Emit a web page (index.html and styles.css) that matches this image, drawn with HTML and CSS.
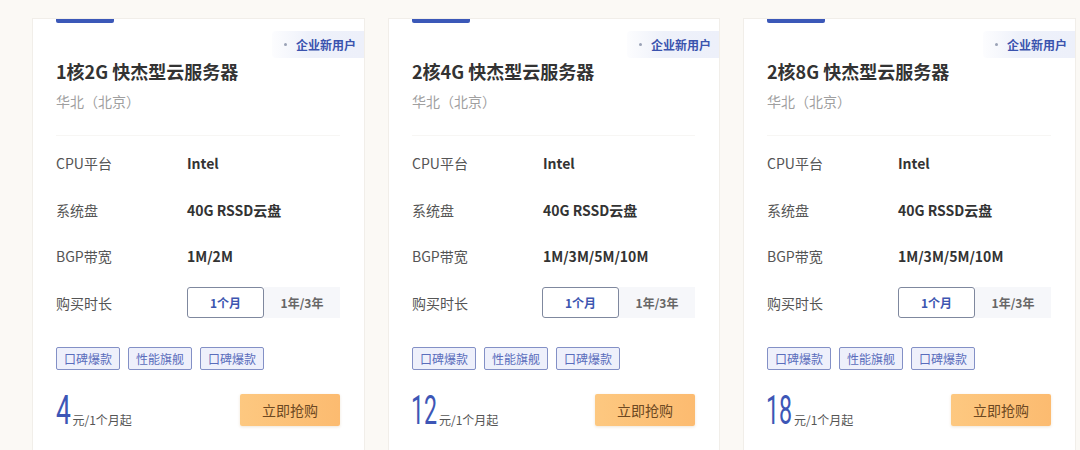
FILE: index.html
```html
<!DOCTYPE html>
<html lang="zh-CN">
<head>
<meta charset="utf-8">
<title>快杰型云服务器</title>
<link rel="stylesheet" href="styles.css">
</head>
<body>
<div class="cards">
  <div class="card">
    <div class="bar"></div>
    <div class="badge"><span class="dot"></span>企业新用户</div>
    <h2 class="title">1核2G 快杰型云服务器</h2>
    <div class="region">华北（北京）</div>
    <div class="divider"></div>
    <div class="specs">
      <div class="row"><span class="label">CPU平台</span><span class="value">Intel</span></div>
      <div class="row"><span class="label">系统盘</span><span class="value">40G RSSD云盘</span></div>
      <div class="row"><span class="label">BGP带宽</span><span class="value">1M/2M</span></div>
      <div class="row"><span class="label">购买时长</span>
        <div class="toggle"><span class="opt active">1个月</span><span class="opt">1年/3年</span></div>
      </div>
    </div>
    <div class="tags"><span class="tag">口碑爆款</span><span class="tag">性能旗舰</span><span class="tag">口碑爆款</span></div>
    <div class="foot">
      <div class="price"><span class="num one">4</span><span class="unit">元/1个月起</span></div>
      <button class="buy">立即抢购</button>
    </div>
  </div>
  <div class="card">
    <div class="bar"></div>
    <div class="badge"><span class="dot"></span>企业新用户</div>
    <h2 class="title">2核4G 快杰型云服务器</h2>
    <div class="region">华北（北京）</div>
    <div class="divider"></div>
    <div class="specs">
      <div class="row"><span class="label">CPU平台</span><span class="value">Intel</span></div>
      <div class="row"><span class="label">系统盘</span><span class="value">40G RSSD云盘</span></div>
      <div class="row"><span class="label">BGP带宽</span><span class="value">1M/3M/5M/10M</span></div>
      <div class="row"><span class="label">购买时长</span>
        <div class="toggle"><span class="opt active">1个月</span><span class="opt">1年/3年</span></div>
      </div>
    </div>
    <div class="tags"><span class="tag">口碑爆款</span><span class="tag">性能旗舰</span><span class="tag">口碑爆款</span></div>
    <div class="foot">
      <div class="price"><span class="num two">12</span><span class="unit">元/1个月起</span></div>
      <button class="buy">立即抢购</button>
    </div>
  </div>
  <div class="card">
    <div class="bar"></div>
    <div class="badge"><span class="dot"></span>企业新用户</div>
    <h2 class="title">2核8G 快杰型云服务器</h2>
    <div class="region">华北（北京）</div>
    <div class="divider"></div>
    <div class="specs">
      <div class="row"><span class="label">CPU平台</span><span class="value">Intel</span></div>
      <div class="row"><span class="label">系统盘</span><span class="value">40G RSSD云盘</span></div>
      <div class="row"><span class="label">BGP带宽</span><span class="value">1M/3M/5M/10M</span></div>
      <div class="row"><span class="label">购买时长</span>
        <div class="toggle"><span class="opt active">1个月</span><span class="opt">1年/3年</span></div>
      </div>
    </div>
    <div class="tags"><span class="tag">口碑爆款</span><span class="tag">性能旗舰</span><span class="tag">口碑爆款</span></div>
    <div class="foot">
      <div class="price"><span class="num two">18</span><span class="unit">元/1个月起</span></div>
      <button class="buy">立即抢购</button>
    </div>
  </div>
</div>
</body>
</html>
```
FILE: styles.css
```css
html, body {
  margin: 0;
  padding: 0;
  height: 450px;
  overflow: hidden;
  background: #fbf9f5;
  font-family: "Noto Sans CJK SC", "Noto Sans", sans-serif;
  color: #333;
}
.cards {
  display: grid;
  grid-template-columns: 331px 330px 331px;
  column-gap: 25px;
  padding: 19px 0 0 33px;
}
.card {
  position: relative;
  background: #fff;
  height: 431px;
  box-sizing: border-box;
  padding: 0 24px 0 23px;
  box-shadow: 0 0 0 1px #f1eee9;
}
.bar {
  width: 58px;
  height: 4px;
  background: #3b58b8;
  border-radius: 0 0 2px 2px;
}
.badge {
  position: absolute;
  top: 12px;
  right: 0;
  height: 27px;
  width: 92px;
  box-sizing: border-box;
  display: flex;
  align-items: center;
  padding-left: 12px;
  font-size: 12px;
  font-weight: 700;
  color: #3a53ae;
  background: linear-gradient(90deg, rgba(236,239,250,0.15) 0%, #eef1fa 40%, #edf0fa 100%);
  border-radius: 4px 0 0 4px;
}
.dot {
  width: 3px;
  height: 3px;
  border-radius: 50%;
  background: #9aa2b6;
  margin-right: 9px;
}
.title {
  margin: 35px 0 0;
  font-size: 18px;
  line-height: 26px;
  font-weight: 700;
  color: #333;
}
.region {
  margin-top: 7px;
  font-size: 14px;
  line-height: 20px;
  color: #a0a0a0;
}
.divider {
  margin-top: 24px;
  height: 1px;
  background: #f7f6f4;
}
.specs {
  margin-top: 4px;
}
.row {
  height: 46.5px;
  display: flex;
  align-items: center;
  font-size: 14px;
}
.label {
  width: 131px;
  color: #555;
}
.value {
  font-weight: 700;
  color: #333;
}
.toggle {
  display: flex;
  height: 31px;
  margin-left: 1px;
  font-size: 12px;
  font-weight: 700;
}
.opt {
  width: 76px;
  display: flex;
  align-items: center;
  justify-content: center;
  background: #f6f7fa;
  color: #666;
}
.opt.active {
  width: 77px;
  box-sizing: border-box;
  background: #fff;
  border: 1px solid #7f889e;
  border-radius: 3px;
  color: #3d55b0;
}
.tags {
  margin-top: 21px;
  display: flex;
  gap: 8px;
}
.tag {
  height: 23px;
  box-sizing: border-box;
  padding: 0 7px;
  display: flex;
  align-items: center;
  font-size: 12px;
  color: #5a6dbc;
  background: #eef0fb;
  border: 1px solid #8390c6;
  border-radius: 2px;
}
.foot {
  margin-top: 24px;
  display: flex;
  justify-content: space-between;
  align-items: flex-end;
}
.price {
  display: flex;
  align-items: flex-end;
  height: 32px;
}
.num {
  display: inline-block;
  font-family: Roboto, "Noto Sans", sans-serif;
  font-weight: 400;
  font-size: 40px;
  line-height: 32px;
  color: #3d56b6;
  transform: scaleX(0.66);
  transform-origin: left bottom;
  position: relative;
  top: 1px;
}
.num.one { margin-right: -6px; }
.num.two {
  transform: scaleX(0.58);
  margin-left: -1px;
  margin-right: -17px;
}
.unit {
  font-size: 12px;
  line-height: 14px;
  color: #555;
  margin-bottom: -1px;
}
.buy {
  width: 100px;
  height: 32px;
  border: 0;
  border-radius: 2px;
  background: linear-gradient(90deg, #fdc880, #fcbb70);
  box-shadow: 0 1px 3px rgba(160, 110, 40, 0.18);
  font-family: "Noto Sans CJK SC", sans-serif;
  font-size: 14px;
  color: #6c4822;
  padding: 0;
}
```
